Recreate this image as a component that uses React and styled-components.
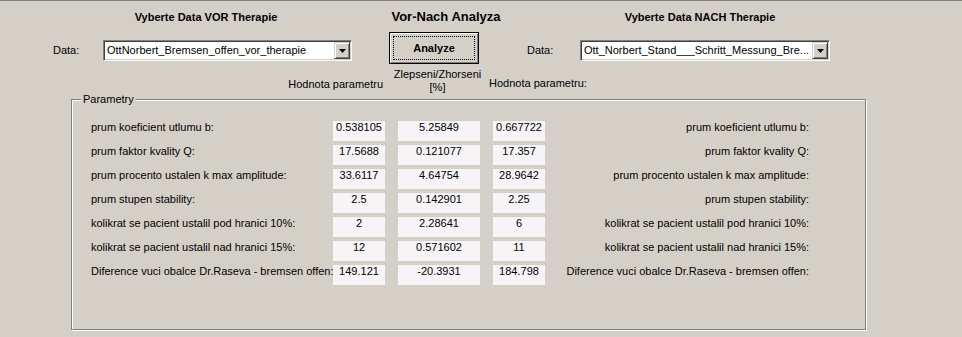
import React from "react";
import styled, { createGlobalStyle } from "styled-components";

const Global = createGlobalStyle`
  html, body { margin: 0; padding: 0; background: #d4d0c8; }
  body {
    font-family: "Liberation Sans", Arial, sans-serif;
    font-size: 11px;
    color: #000;
  }
  * { box-sizing: border-box; }
`;

const Window = styled.div`
  width: 962px;
  height: 337px;
  border-top: 1px solid #808080;
  overflow: hidden;
  background: #d4d0c8;
`;

const TitleRow = styled.div`
  display: flex;
  align-items: baseline;
  height: 31px;
  padding-top: 8px;
`;

const Title = styled.div`
  width: ${(p) => p.$w}px;
  margin-left: ${(p) => p.$ml}px;
  text-align: center;
  font-weight: bold;
  font-size: ${(p) => (p.$big ? 13 : 11)}px;
  line-height: ${(p) => (p.$big ? 15 : 13)}px;
  white-space: nowrap;
`;

const ControlRow = styled.div`
  display: flex;
  align-items: flex-start;
  height: 32px;
`;

const DataLabel = styled.div`
  width: ${(p) => p.$w}px;
  margin-left: ${(p) => p.$ml}px;
  margin-top: 12px;
  line-height: 13px;
`;

const Combo = styled.div`
  display: flex;
  align-items: center;
  width: ${(p) => p.$w}px;
  height: 21px;
  margin-top: 8px;
  background: #fff;
  border: 1px solid;
  border-color: #808080 #fff #fff #808080;
  box-shadow: inset 1px 1px 0 #404040, inset -1px -1px 0 #d4d0c8;
  padding: 1px 1px 1px 2px;
`;

const ComboText = styled.div`
  flex: 1;
  line-height: 13px;
  white-space: nowrap;
  overflow: hidden;
  padding-left: 1px;
`;

const DropButton = styled.div`
  display: flex;
  align-items: center;
  justify-content: center;
  width: 16px;
  height: 17px;
  background: #d4d0c8;
  border: 1px solid;
  border-color: #d4d0c8 #404040 #404040 #d4d0c8;
  box-shadow: inset 1px 1px 0 #fff, inset -1px -1px 0 #808080;
`;

const Arrow = styled.svg`
  display: block;
`;

const ActionButton = styled.div`
  position: relative;
  display: flex;
  align-items: center;
  justify-content: center;
  width: 90px;
  height: 32px;
  margin-left: 37px;
  background: #d4d0c8;
  border: 1px solid #000;
  box-shadow: inset 1px 1px 0 #fff, inset -1px -1px 0 #808080;
  font-weight: bold;
  font-size: 11px;
`;

const FocusRing = styled.div`
  position: absolute;
  inset: 3px;
  border: 1px dotted #000;
`;

const HeadRow = styled.div`
  display: flex;
  align-items: flex-start;
  height: 35px;
`;

const ColHead = styled.div`
  width: ${(p) => p.$w}px;
  margin-left: ${(p) => p.$ml || 0}px;
  margin-top: ${(p) => p.$mt}px;
  text-align: ${(p) => p.$align};
  line-height: 13px;
  white-space: nowrap;
`;

const GroupBox = styled.div`
  position: relative;
  margin-left: 71px;
  width: 795px;
  height: 231px;
  border: 1px solid #808080;
  box-shadow: inset 1px 1px 0 #fff, 1px 1px 0 #fff;
  padding: 21px 0 0 19px;
`;

const Legend = styled.div`
  position: absolute;
  top: -7px;
  left: 9px;
  padding: 0 2px;
  background: #d4d0c8;
  line-height: 13px;
`;

const ParamGrid = styled.div`
  display: grid;
  grid-template-columns: 229px 52px 82px 52px 251px;
  grid-auto-rows: 20px;
  column-gap: 13px;
  row-gap: 4px;
`;

const ParamLabel = styled.div`
  line-height: 13px;
  white-space: nowrap;
  text-align: ${(p) => (p.$right ? "right" : "left")};
`;

const ValueBox = styled.div`
  background: #f7f4f7;
  text-align: center;
  line-height: 13px;
  white-space: nowrap;
`;

const rows = [
  ["prum koeficient utlumu b:", "0.538105", "5.25849", "0.667722"],
  ["prum faktor kvality Q:", "17.5688", "0.121077", "17.357"],
  ["prum procento ustalen k max amplitude:", "33.6117", "4.64754", "28.9642"],
  ["prum stupen stability:", "2.5", "0.142901", "2.25"],
  ["kolikrat se pacient ustalil pod hranici 10%:", "2", "2.28641", "6"],
  ["kolikrat se pacient ustalil nad hranici 15%:", "12", "0.571602", "11"],
  ["Diference vuci obalce Dr.Raseva - bremsen offen:", "149.121", "-20.3931", "184.798"],
];

function ComboBox({ w, text }) {
  return (
    <Combo $w={w}>
      <ComboText>{text}</ComboText>
      <DropButton>
        <Arrow width="7" height="4" viewBox="0 0 7 4">
          <path d="M0 0h7L3.5 4z" fill="#000" />
        </Arrow>
      </DropButton>
    </Combo>
  );
}

export default function App() {
  return (
    <>
      <Global />
      <Window>
        <TitleRow>
          <Title $w={212} $ml={100}>Vyberte Data VOR Therapie</Title>
          <Title $w={132} $ml={68} $big>Vor-Nach Analyza</Title>
          <Title $w={200} $ml={88}>Vyberte Data NACH Therapie</Title>
        </TitleRow>
        <ControlRow>
          <DataLabel $w={50} $ml={53}>Data:</DataLabel>
          <ComboBox w={249} text="OttNorbert_Bremsen_offen_vor_therapie" />
          <ActionButton>
            <FocusRing />
            Analyze
          </ActionButton>
          <DataLabel $w={53} $ml={48}>Data:</DataLabel>
          <ComboBox w={250} text="Ott_Norbert_Stand___Schritt_Messung_Bre..." />
        </ControlRow>
        <HeadRow>
          <ColHead $w={383} $mt={14} $align="right">Hodnota parametru</ColHead>
          <ColHead $w={95} $ml={7} $mt={4} $align="center">
            Zlepseni/Zhorseni
            <br />
            [%]
          </ColHead>
          <ColHead $w={120} $ml={4} $mt={13} $align="left">Hodnota parametru:</ColHead>
        </HeadRow>
        <GroupBox>
          <Legend>Parametry</Legend>
          <ParamGrid>
            {rows.map(([label, a, b, c]) => (
              <React.Fragment key={label}>
                <ParamLabel>{label}</ParamLabel>
                <ValueBox>{a}</ValueBox>
                <ValueBox>{b}</ValueBox>
                <ValueBox>{c}</ValueBox>
                <ParamLabel $right>{label}</ParamLabel>
              </React.Fragment>
            ))}
          </ParamGrid>
        </GroupBox>
      </Window>
    </>
  );
}
